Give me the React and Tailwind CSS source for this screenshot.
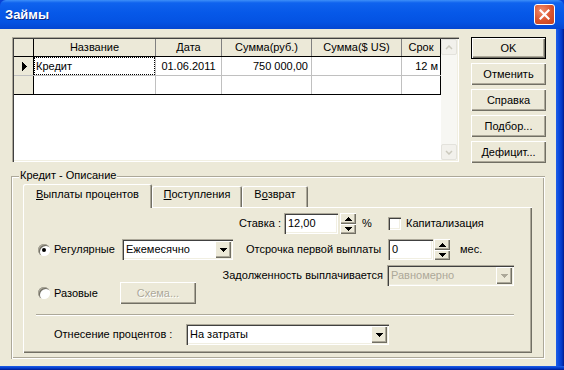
import React from "react";

const raised = "shadow-[inset_1px_1px_0_#fff,inset_-1px_-1px_0_#716f64,inset_-2px_-2px_0_#aca899]";
const sunken = "shadow-[inset_1px_1px_0_#aca899,inset_2px_2px_0_#404040,inset_-1px_-1px_0_#fff,inset_-2px_-2px_0_#f1efe2]";

function Arrow({ up, color = "#000" }) {
    return (
        <svg width="7" height="4" viewBox="0 0 7 4" shapeRendering="crispEdges">
            <path d={up ? "M0 4h7L3.5 0z" : "M0 0h7L3.5 4z"} fill={color} />
        </svg>
    );
}

function Button({ children, isDefault, disabled, className = "" }) {
    const frame = isDefault
        ? "shadow-[inset_0_0_0_1px_#000,inset_2px_2px_0_#fff,inset_-2px_-2px_0_#716f64,inset_-3px_-3px_0_#aca899]"
        : raised;
    return (
        <div className={`flex items-center justify-center bg-[#ece9d8] ${frame} ${className}`}>
            <span className={disabled ? "text-[#aca899] [text-shadow:1px_1px_0_#fff]" : ""}>{children}</span>
        </div>
    );
}

function Combo({ value, className = "", disabled }) {
    return (
        <div className={`flex h-[21px] p-[2px] ${sunken} ${disabled ? "bg-[#ece9d8]" : "bg-white"} ${className}`}>
            <div className={`flex-1 pl-[2px] leading-[17px] ${disabled ? "text-[#aca899]" : ""}`}>{value}</div>
            <div className={`w-[16px] flex items-center justify-center bg-[#ece9d8] ${raised}`}>
                <Arrow color={disabled ? "#aca899" : "#000"} />
            </div>
        </div>
    );
}

function Edit({ value, className = "" }) {
    return (
        <div className={`h-[21px] bg-white pl-[4px] leading-[21px] ${sunken} ${className}`}>{value}</div>
    );
}

function Spin() {
    return (
        <div className="w-[16px] h-[21px] flex flex-col">
            <div className={`h-[11px] flex items-center justify-center bg-[#ece9d8] ${raised}`}>
                <Arrow up />
            </div>
            <div className={`h-[10px] flex items-center justify-center bg-[#ece9d8] ${raised}`}>
                <Arrow />
            </div>
        </div>
    );
}

function Radio({ checked }) {
    return (
        <div className="w-[12px] h-[12px] rounded-full bg-white flex items-center justify-center shadow-[inset_1px_1px_0_#aca899,inset_2px_2px_0_#716f64,inset_-1px_-1px_0_#fff]">
            {checked && <div className="w-[4px] h-[4px] rounded-full bg-black" />}
        </div>
    );
}

function ScrollBtn({ up }) {
    return (
        <div className="h-[16px] w-[16px] rounded-[2px] border border-[#e3e2dc] bg-[#f2f1ec] flex items-center justify-center">
            <svg width="8" height="5" viewBox="0 0 8 5">
                <path d={up ? "M1 4L4 1L7 4" : "M1 1L4 4L7 1"} stroke="#cbc9bd" strokeWidth="1.5" fill="none" />
            </svg>
        </div>
    );
}

const cols = [
    { title: "Название", w: "w-[122px]" },
    { title: "Дата", w: "w-[66px]" },
    { title: "Сумма(руб.)", w: "w-[90px]" },
    { title: "Сумма($ US)", w: "w-[90px]" },
    { title: "Срок", w: "w-[39px]" },
];

function Grid() {
    return (
        <div className="w-[447px] h-[125px] bg-white flex p-[2px] shadow-[inset_1px_1px_0_#aca899,inset_2px_2px_0_#404040,inset_-1px_-1px_0_#fff,inset_-2px_-2px_0_#f1efe2]">
            <div className="flex-1 flex flex-col">
                {/* header */}
                <div className="flex h-[18px] border-b border-black">
                    <div className="w-[20px] bg-[#ece9d8] border-r border-black" />
                    {cols.map((c, i) => (
                        <div
                            key={c.title}
                            className={`${c.w} bg-[#ece9d8] text-center leading-[17px] border-r ${i === 4 ? "border-black" : "border-[#808080]"}`}
                        >
                            {c.title}
                        </div>
                    ))}
                </div>
                {/* row 1 */}
                <div className="flex h-[19px] border-b border-[#c0c0c0]">
                    <div className="w-[20px] bg-[#ece9d8] border-r border-black flex items-center pl-[8px]">
                        <svg width="5" height="9" viewBox="0 0 5 9" shapeRendering="crispEdges">
                            <path d="M0 0L5 4.5L0 9z" fill="#000" />
                        </svg>
                    </div>
                    <div className="w-[122px] border-r border-[#c0c0c0]">
                        <div className="h-full border border-dotted border-black pl-[1px] leading-[16px]">Кредит</div>
                    </div>
                    <div className="w-[66px] border-r border-[#c0c0c0] text-center leading-[18px]">01.06.2011</div>
                    <div className="w-[90px] border-r border-[#c0c0c0] text-right pr-[3px] leading-[18px]">750 000,00</div>
                    <div className="w-[90px] border-r border-[#c0c0c0]" />
                    <div className="w-[39px] border-r border-black text-right pr-[2px] leading-[18px]">12 м</div>
                </div>
                {/* row 2 */}
                <div className="flex h-[19px] border-b border-black self-start">
                    <div className="w-[20px] bg-[#ece9d8] border-r border-black" />
                    <div className="w-[122px] border-r border-[#c0c0c0]" />
                    <div className="w-[66px] border-r border-[#c0c0c0]" />
                    <div className="w-[90px] border-r border-[#c0c0c0]" />
                    <div className="w-[90px] border-r border-[#c0c0c0]" />
                    <div className="w-[39px] border-r border-black" />
                </div>
            </div>
            <div className="w-[16px] bg-[#f7f7f3] flex flex-col justify-between">
                <ScrollBtn up />
                <ScrollBtn />
            </div>
        </div>
    );
}

function Tab({ children, active, className = "" }) {
    return active ? (
        <div className={`relative z-10 h-[24px] -mb-[1px] pt-[4px] text-center bg-[#ece9d8] rounded-t-[2px] shadow-[inset_1px_1px_0_#fff,inset_-1px_0_0_#716f64,inset_-2px_0_0_#aca899] ${className}`}>
            {children}
        </div>
    ) : (
        <div className={`h-[21px] pt-[2px] text-center bg-[#ece9d8] rounded-t-[2px] shadow-[inset_1px_1px_0_#fff,inset_-1px_0_0_#716f64,inset_-2px_0_0_#aca899] ${className}`}>
            {children}
        </div>
    );
}

export default function App() {
    return (
        <div className="w-[564px] h-[370px] flex flex-col overflow-hidden font-['Liberation_Sans',Arial,sans-serif] text-[11px] leading-[13px] text-black bg-[#0842d6]">
            {/* title bar */}
            <div className="h-[29px] flex items-center justify-between pl-[5px] pr-[9px] rounded-t-[6px] bg-[linear-gradient(to_bottom,#3d8ff8_0%,#0f63ee_10%,#0658e8_45%,#0453e3_75%,#0446d2_100%)]">
                <span className="text-white font-bold text-[13px] [text-shadow:1px_1px_0_#0b2a8a]">Займы</span>
                <div className="w-[21px] h-[21px] rounded-[3px] border border-white flex items-center justify-center bg-[radial-gradient(circle_at_35%_30%,#f08d6e,#d9532d_55%,#c2401f)]">
                    <svg width="11" height="11" viewBox="0 0 11 11">
                        <path d="M1.5 1.5L9.5 9.5M9.5 1.5L1.5 9.5" stroke="#fff" strokeWidth="2.2" strokeLinecap="square" />
                    </svg>
                </div>
            </div>

            <div className="flex flex-1 min-h-0">
                {/* client area */}
                <div className="w-[556px] bg-[#ece9d8] flex flex-col">
                    <div className="flex pt-[8px] pl-[12px]">
                        <Grid />
                        <div className="ml-[12px] w-[75px] flex flex-col gap-[4px]">
                            <Button isDefault className="h-[22px]">OK</Button>
                            <Button className="h-[22px]">Отменить</Button>
                            <Button className="h-[22px]">Справка</Button>
                            <Button className="h-[22px]">Подбор...</Button>
                            <Button className="h-[22px]">Дефицит...</Button>
                        </div>
                    </div>

                    {/* group box */}
                    <div className="relative mt-[13px] ml-[11px] w-[534px] h-[183px] pt-[8px] pl-[12px] shadow-[inset_1px_1px_0_#aca899,inset_2px_2px_0_#fff,inset_-1px_-1px_0_#fff,inset_-2px_-2px_0_#aca899]">
                        <span className="absolute -top-[7px] left-[8px] px-[1px] bg-[#ece9d8]">Кредит - Описание</span>

                        <div className="flex items-end h-[23px]">
                            <Tab active className="w-[129px]">
                                <span className="underline">В</span>ыплаты процентов
                            </Tab>
                            <Tab className="w-[90px]">
                                <span className="underline">П</span>оступления
                            </Tab>
                            <Tab className="w-[66px]">
                                В<span className="underline">о</span>зврат
                            </Tab>
                        </div>

                        {/* tab panel */}
                        <div className="w-[509px] h-[146px] pt-[6px] flex flex-col shadow-[inset_1px_1px_0_#fff,inset_-1px_-1px_0_#716f64,inset_-2px_-2px_0_#aca899]">
                            <div className="flex items-center h-[21px]">
                                <div className="w-[258px] text-right">Ставка :</div>
                                <Edit value="12,00" className="ml-[3px] w-[54px]" />
                                <div className="ml-[2px]"><Spin /></div>
                                <div className="ml-[6px] w-[26px]">%</div>
                                <div className={`w-[13px] h-[13px] bg-white ${sunken}`} />
                                <div className="ml-[5px]">Капитализация</div>
                            </div>

                            <div className="flex items-center h-[21px] mt-[5px]">
                                <div className="ml-[15px]"><Radio checked /></div>
                                <div className="ml-[4px] w-[68px]">Регулярные</div>
                                <Combo value="Ежемесячно" className="w-[111px]" />
                                <div className="ml-[13px] w-[142px]">Отсрочка первой выплаты</div>
                                <Edit value="0" className="w-[45px]" />
                                <div className="ml-[1px]"><Spin /></div>
                                <div className="ml-[10px]">мес.</div>
                            </div>

                            <div className="flex h-[40px] mt-[5px]">
                                <div className="w-[173px] mt-[17px] h-[22px] flex items-center">
                                    <div className="ml-[15px]"><Radio /></div>
                                    <div className="ml-[4px] w-[66px]">Разовые</div>
                                    <Button disabled className="w-[76px] h-[22px]">Схема...</Button>
                                </div>
                                <div className="flex items-center h-[21px]">
                                    <div className="w-[187px] text-right">Задолженность выплачивается</div>
                                    <Combo value="Равномерно" disabled className="ml-[4px] w-[127px]" />
                                </div>
                            </div>

                            <div className="mt-[9px] ml-[13px] w-[478px] border-t border-[#aca899] border-b border-b-white" />

                            <div className="flex items-center h-[21px] mt-[8px]">
                                <div className="ml-[31px] w-[132px]">Отнесение процентов :</div>
                                <Combo value="На затраты" className="w-[203px]" />
                            </div>
                        </div>
                    </div>
                </div>
                {/* right frame */}
                <div className="flex-1 bg-[linear-gradient(to_right,#1e5fe8,#0a48dc_40%,#0036c4_75%,#001a8a)]" />
            </div>
            {/* bottom frame */}
            <div className="h-[4px] bg-[linear-gradient(to_bottom,#1e5fe8,#0036c4_60%,#001a8a)]" />
        </div>
    );
}
